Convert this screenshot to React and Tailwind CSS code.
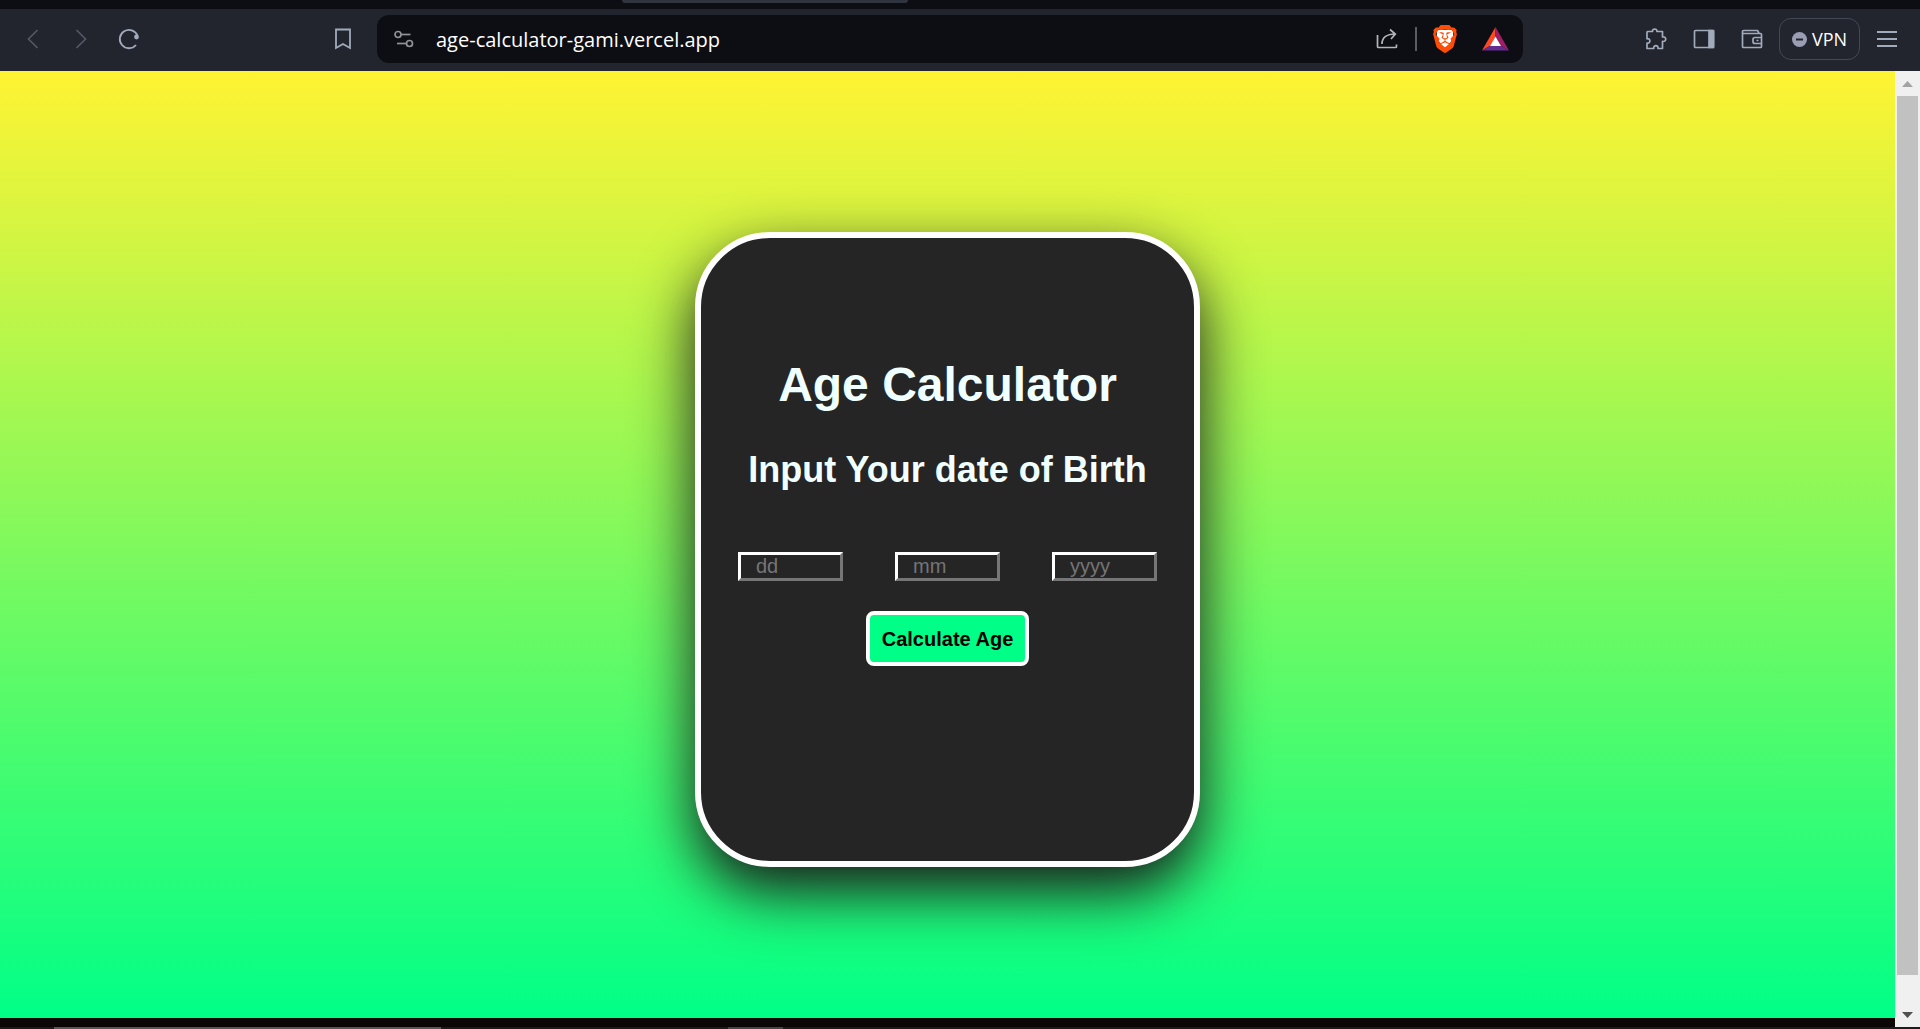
import { SiBrave } from "react-icons/si";

function IconButton({ label, dim, children }) {
  return (
    <button
      type="button"
      aria-label={label}
      className={
        "flex h-12 w-12 shrink-0 items-center justify-center " +
        (dim ? "text-[#535864]" : "text-[#a1abbc]")
      }
    >
      {children}
    </button>
  );
}

function Icon({ children }) {
  return (
    <svg
      width="24"
      height="24"
      viewBox="0 0 24 24"
      fill="none"
      stroke="currentColor"
      strokeWidth="1.7"
      aria-hidden="true"
    >
      {children}
    </svg>
  );
}

function AddressBar() {
  return (
    <div className="ml-[10px] mr-[109px] flex h-12 min-w-0 flex-1 items-center rounded-xl bg-[#0d0e13] pl-[15px] pr-[14px]">
      <button type="button" aria-label="Site settings" className="mr-5 text-[#8f9299]">
        <Icon>
          <circle cx="6" cy="7.5" r="3" />
          <path d="M9 7.5h9.500" />
          <circle cx="17.5" cy="16.5" r="3" />
          <path d="M14.5 16.5H5" />
        </Icon>
      </button>
      <input
        type="text"
        aria-label="Address"
        defaultValue="age-calculator-gami.vercel.app"
        className="min-w-0 flex-1 bg-transparent pt-[2px] font-['Open_Sans',sans-serif] text-xl text-white outline-none"
      />
      <button type="button" aria-label="Share" className="text-[#b4b5b8]">
        <Icon>
          <path strokeLinejoin="round" d="M2.500 8v11.500a1 1 0 0 0 1 1H20.500a1 1 0 0 0 1-1V17.500" />
          <path d="M7 17c0-6 4-10 13.500-10M15 2.500L20.300 7 16 12" />
        </Icon>
      </button>
      <span className="ml-4 mr-[14px] h-6 w-[2px] bg-[#5b5d62]" />
      <button type="button" aria-label="Brave Shields" className="text-[#ff4d06]">
        <svg width="28" height="28" viewBox="0 0 24 24" aria-hidden="true">
          <path d="M5 4h14v8l-7 9-7-9z" fill="#fff" />
          <SiBrave size={24} />
        </svg>
      </button>
      <button type="button" aria-label="Brave Rewards" className="ml-[23px]">
        <svg width="27" height="24" viewBox="0 0 27 24" aria-hidden="true">
          <path d="M13.5 0L0 23.5l8.5-5 5-9z" fill="#ff4724" />
          <path d="M13.5 0L27 23.5l-8.500-5-5-9z" fill="#9e1f63" />
          <path d="M0 23.500h27l-8.500-5h-10z" fill="#662d91" />
          <path d="M13.500 9.500l5.500 9.500H8z" fill="#fff" />
        </svg>
      </button>
    </div>
  );
}

function Toolbar() {
  return (
    <header className="shrink-0">
      <div className="flex h-[9px] justify-center bg-[#0d0e13] pr-[390px]">
        <div className="h-[3px] w-[286px] rounded-b-lg bg-[#2f343f]" />
      </div>
      <div className="flex h-[62px] items-center bg-[#22252d] px-[9px] pb-[2px]">
        <IconButton label="Back" dim>
          <Icon>
            <path d="M16.500 3L7.500 12l9 9" />
          </Icon>
        </IconButton>
        <IconButton label="Forward" dim>
          <Icon>
            <path d="M7.500 3l9 9-9 9" />
          </Icon>
        </IconButton>
        <IconButton label="Reload">
          <Icon>
            <path d="M19 18A9.200 9.200 0 1 1 20.500 8.500" strokeWidth="1.800" />
            <circle cx="19.500" cy="10" r="2.400" fill="currentColor" stroke="none" />
          </Icon>
        </IconButton>
        <div className="ml-[166px]">
          <IconButton label="Bookmark">
            <Icon>
              <path d="M5 2.500h14v18.500l-7-4-7 4z" strokeWidth="1.800" />
            </Icon>
          </IconButton>
        </div>
        <AddressBar />
        <IconButton label="Extensions">
          <Icon>
            <path
              strokeLinejoin="round"
              d="M3.500 4.500H8.500c-.6-3.300 5-3.300 4.400 0H18.500V10c4.300-.8 4.300 5.200 0 4.400V21.500H14c.8-3.800-5-3.800-4.200 0H3V16c3.800.8 3.800-5 0-4.200V5z"
            />
          </Icon>
        </IconButton>
        <IconButton label="Sidebar">
          <Icon>
            <rect x="2.500" y="3.500" width="19" height="17" rx="1" />
            <path d="M17 3.500h4.500v17H17z" fill="currentColor" />
          </Icon>
        </IconButton>
        <IconButton label="Wallet">
          <Icon>
            <path d="M2.500 6.500V19.500a1 1 0 0 0 1 1h17a1 1 0 0 0 1-1V7.500a1 1 0 0 0-1-1zV4.500a1 1 0 0 1 1-1H17.500l1.500 2.500" />
            <path d="M21.500 10.500H15a2 2 0 0 0-2 2v2a2 2 0 0 0 2 2h6.500M16.500 13.500h2" />
          </Icon>
        </IconButton>
        <button
          type="button"
          className="ml-[3px] mr-[3px] flex h-[42px] w-[81px] shrink-0 items-center justify-center gap-[5px] rounded-xl border border-[#444956] font-['Open_Sans',sans-serif] text-lg text-white"
        >
          <svg width="15" height="15" viewBox="0 0 15 15" aria-hidden="true">
            <circle cx="7.500" cy="7.500" r="7.500" fill="#9a9db3" />
            <path d="M4 7.500h7" stroke="#22252d" strokeWidth="2" />
          </svg>
          VPN
        </button>
        <IconButton label="Menu">
          <Icon>
            <path d="M2 5h20M2 12h20M2 19h20" strokeWidth="1.800" />
          </Icon>
        </IconButton>
      </div>
    </header>
  );
}

function DateField({ label, placeholder }) {
  return (
    <input
      type="text"
      inputMode="numeric"
      aria-label={label}
      placeholder={placeholder}
      className="h-[29px] w-[105px] border-[3px] border-b-[#767676] border-l-white border-r-[#767676] border-t-white bg-transparent px-[15px] text-xl leading-[23px] text-[#f0ffff] placeholder:text-[#757575]"
    />
  );
}

function Calculator() {
  return (
    <form className="flex min-h-[635px] w-[505px] flex-col items-center rounded-[75px] border-6 border-white bg-[#252525] px-[37px] pt-[119px] shadow-[0_25px_60px_#181818]">
      <h1 className="text-5xl font-bold leading-[56px] text-[#f0ffff]">Age Calculator</h1>
      <h2 className="mt-9 text-4xl font-bold leading-[42px] text-[#f0ffff]">
        Input Your date of Birth
      </h2>
      <div className="mt-[61px] flex w-full justify-between">
        <DateField label="Day" placeholder="dd" />
        <DateField label="Month" placeholder="mm" />
        <DateField label="Year" placeholder="yyyy" />
      </div>
      <button
        type="button"
        className="mt-[30px] h-[55px] rounded-lg border-4 border-white bg-[#00ff87] px-3 text-xl font-bold text-black"
      >
        Calculate Age
      </button>
    </form>
  );
}

function Scrollbar() {
  return (
    <div className="flex w-[25px] shrink-0 flex-col items-center justify-between bg-[#f0f0f0]" aria-hidden="true">
      <div className="flex h-[25px] items-center">
        <svg width="11" height="6" viewBox="0 0 11 6">
          <path d="M0 6L5.500 0 11 6z" fill="#a3a3a3" />
        </svg>
      </div>
      <div className="mb-[27px] w-[21px] flex-1 bg-[#c1c1c1]" />
      <div className="flex h-[25px] items-center">
        <svg width="11" height="6" viewBox="0 0 11 6">
          <path d="M0 0L5.500 6 11 0z" fill="#505050" />
        </svg>
      </div>
    </div>
  );
}

export default function App() {
  return (
    <div className="flex h-screen flex-col overflow-hidden font-['Liberation_Sans',Arial,sans-serif]">
      <Toolbar />
      <div className="flex min-h-0 flex-1">
        <div className="flex min-w-0 flex-1 flex-col">
          <main className="flex flex-1 items-center justify-center bg-linear-to-b/srgb from-[#fff333] to-[#00ff87] pt-[10px]">
            <Calculator />
          </main>
          <div className="h-[9px] bg-[#0c0606]" />
        </div>
        <Scrollbar />
      </div>
      <footer className="flex h-[2px] shrink-0 bg-[#1e1a1b]">
        <div className="ml-[54px] w-[387px] bg-[#5b5556]" />
        <div className="ml-[287px] w-[55px] bg-[#484344]" />
      </footer>
    </div>
  );
}
